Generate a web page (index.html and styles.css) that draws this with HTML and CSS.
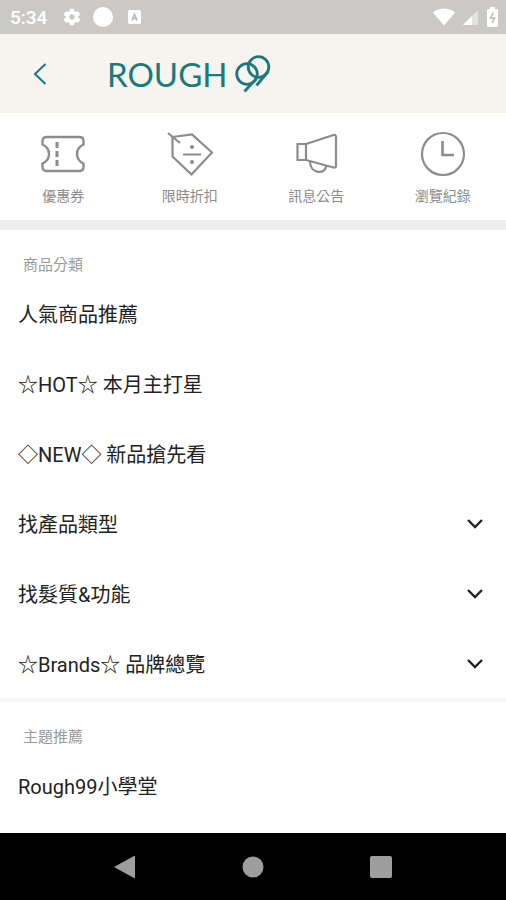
FILE: index.html
```html
<!DOCTYPE html>
<html lang="zh-Hant">
<head>
<meta charset="utf-8">
<meta name="viewport" content="width=device-width, initial-scale=1">
<title>ROUGH99</title>
<link rel="stylesheet" href="styles.css">
</head>
<body>
<div class="status">
  <span class="time">5:34</span>
  <svg class="gear" width="20" height="20" viewBox="0 0 24 24"><path fill="currentColor" fill-rule="evenodd" d="M19.4 13a7.500 7.500 0 0 0 0-2l2.100-1.600a.5.5 0 0 0 .1-.6l-2-3.500a.5.5 0 0 0-.6-.2l-2.500 1a7.300 7.300 0 0 0-1.700-1L14.400 2.400a.5.5 0 0 0-.5-.4h-4a.5.5 0 0 0-.5.4L9 5.100a7.700 7.700 0 0 0-1.700 1l-2.500-1a.5.5 0 0 0-.6.2l-2 3.500a.5.5 0 0 0 .1.600L4.500 11a8 8 0 0 0 0 2l-2.200 1.600a.5.5 0 0 0-.1.600l2 3.500c.1.200.4.300.6.200l2.500-1a7.300 7.300 0 0 0 1.700 1l.4 2.700c0 .2.200.4.500.4h4c.3 0 .5-.2.500-.4l.4-2.700a7.700 7.700 0 0 0 1.700-1l2.500 1c.2.100.5 0 .6-.2l2-3.500a.5.5 0 0 0-.1-.6zM12 15.200a3.200 3.200 0 1 1 0-6.400 3.200 3.200 0 0 1 0 6.400z"/></svg>
  <svg width="20" height="20" viewBox="0 0 20 20"><circle cx="10" cy="10" r="10" fill="currentColor"/></svg>
  <svg width="20" height="20" viewBox="0 0 20 20"><rect x="4" y="3" width="13" height="14" rx="1.500" fill="currentColor"/><path d="M8 13.500 10.500 7l2.500 6.500M9 11.500h3" fill="none" stroke="#b9b7b4" stroke-width="1.500"/></svg>
  <span class="system">
    <svg width="22" height="18" viewBox="0 0 22 18"><path fill="currentColor" d="M0 4.500C6-.8 16-.8 22 4.500L11 17.500z"/></svg>
    <svg width="16" height="18" viewBox="0 0 16 18"><path fill="currentColor" opacity=".45" d="M0 17 15 2v15z"/><path fill="currentColor" d="M0 17 9 8v9z"/></svg>
    <svg width="11" height="20" viewBox="0 0 11 20"><path fill="currentColor" d="M3 2V0h5v2h1.500Q11 2 11 3.500v15Q11 20 9.500 20h-8Q0 20 0 18.500v-15Q0 2 1.500 2z"/><path d="M6.500 5.500 3.500 11h4L5 16" fill="none" stroke="#b9b7b4" stroke-width="1.500"/></svg>
  </span>
</div>

<header class="header">
  <button class="back" aria-label="返回"><svg width="14" height="24" viewBox="0 0 14 24"><path d="M12.500 2 2 12l10.500 10" fill="none" stroke="currentColor" stroke-width="2"/></svg></button>
  <a class="logo" href="#">
    <span class="wordmark">ROUGH</span>
    <svg class="monogram" width="36" height="38" viewBox="0 0 36 38"><g fill="none" stroke="currentColor" stroke-width="2.800"><circle cx="12" cy="19" r="10.300"/><circle cx="23.500" cy="12" r="10.300"/><path d="M21.500 23.500 9.500 36.500M33 16.500 21.500 30.500"/></g></svg>
  </a>
</header>

<nav class="shortcuts">
  <a href="#"><svg width="46" height="46" viewBox="0 0 46 46"><g fill="none" stroke="currentColor" stroke-width="2.400"><path d="M6.500 6h33q4 0 4 4v3.500q-6.500 3-6.500 9.500t6.500 9.500V36q0 4-4 4h-33q-4 0-4-4v-3.500Q9 29.500 9 23t-6.500-9.500V10q0-4 4-4z"/><path d="M17 11v6M17 20v6M17 29v6" stroke-width="3"/></g></svg>優惠券</a>
  <a href="#"><svg width="46" height="46" viewBox="0 0 46 46"><g fill="none" stroke="currentColor" stroke-width="2.200"><path d="M5.500 6 25 3.500l20 18L24.500 43.500l-19-18z"/><path d="m1 2 12 10M16 23.500h18"/></g><g fill="currentColor"><circle cx="25" cy="16" r="2"/><circle cx="25" cy="31" r="2"/></g></svg>限時折扣</a>
  <a href="#"><svg width="46" height="46" viewBox="0 0 46 46"><g fill="none" stroke="currentColor" stroke-width="2.200"><path d="M4.500 13H13v16H4.500zM13 13l27.500-9q2.500-.5 2.500 2v29q0 2-2.500 1.500L13 29M17 30.500c0 13 16 13 16 4.500"/></g></svg>訊息公告</a>
  <a href="#"><svg width="46" height="46" viewBox="0 0 46 46"><g fill="none" stroke="currentColor" stroke-width="2.200"><circle cx="23" cy="23" r="21"/><path d="M22.500 10v14H34" stroke-width="2.600"/></g></svg>瀏覽紀錄</a>
</nav>

<main>
  <section>
    <h2>商品分類</h2>
    <a class="row" href="#">人氣商品推薦</a>
    <a class="row" href="#">☆HOT☆ 本月主打星</a>
    <a class="row" href="#">◇NEW◇ 新品搶先看</a>
    <button class="row" aria-expanded="false">找產品類型<svg width="18" height="12" viewBox="0 0 18 12"><path d="m2 3 7 7 7-7" fill="none" stroke="currentColor" stroke-width="2.400"/></svg></button>
    <button class="row" aria-expanded="false">找髮質&amp;功能<svg width="18" height="12" viewBox="0 0 18 12"><path d="m2 3 7 7 7-7" fill="none" stroke="currentColor" stroke-width="2.400"/></svg></button>
    <button class="row" aria-expanded="false">☆Brands☆ 品牌總覽<svg width="18" height="12" viewBox="0 0 18 12"><path d="m2 3 7 7 7-7" fill="none" stroke="currentColor" stroke-width="2.400"/></svg></button>
  </section>
  <section>
    <h2>主題推薦</h2>
    <a class="row" href="#">Rough99小學堂</a>
  </section>
</main>

<div class="navbar">
  <button aria-label="返回"><svg width="22" height="24" viewBox="0 0 22 24"><path d="M0 12 20 1q1-.5 1 .5v21q0 1-1 .5z" fill="currentColor"/></svg></button>
  <button aria-label="主畫面"><svg width="22" height="22" viewBox="0 0 22 22"><circle cx="11" cy="11" r="10.500" fill="currentColor"/></svg></button>
  <button aria-label="最近使用"><svg width="22" height="22" viewBox="0 0 22 22"><rect width="22" height="22" rx="2" fill="currentColor"/></svg></button>
</div>
</body>
</html>
```
FILE: styles.css
```css
* {
  box-sizing: border-box;
}

body {
  margin: 0;
  min-height: 100vh;
  display: flex;
  flex-direction: column;
  background: #fff;
  color: #222;
  font-family: Roboto, "Noto Sans CJK TC", sans-serif;
  font-size: 20px;
}

a {
  color: inherit;
  text-decoration: none;
}

button {
  border: 0;
  padding: 0;
  background: none;
  color: inherit;
  font: inherit;
}

svg {
  display: block;
  flex: none;
}

.status {
  display: flex;
  align-items: center;
  gap: 11px;
  height: 34px;
  padding: 0 8px 0 10px;
  background: #cbc9c6;
  color: #fff;
}

.time {
  font-size: 19px;
  font-weight: 500;
}

.gear {
  margin-left: 4px;
}

.system {
  display: flex;
  align-items: center;
  gap: 8px;
  margin-left: auto;
}

.header {
  display: flex;
  align-items: center;
  height: 79px;
  padding-left: 33px;
  background: #f7f4ef;
  color: #1a7a7e;
}

.logo {
  display: flex;
  align-items: center;
  gap: 8px;
  margin-left: 60px;
}

.wordmark {
  font-family: Lato, sans-serif;
  font-size: 33px;
  line-height: 40px;
}

.shortcuts {
  display: grid;
  grid-template-columns: repeat(4, 1fr);
  padding: 18px 0 14px;
  border-bottom: 10px solid #ededed;
  color: #8c8c8c;
  font-size: 14px;
  line-height: 20px;
}

.shortcuts a {
  display: flex;
  flex-direction: column;
  align-items: center;
  gap: 9px;
}

main {
  flex: 1;
}

section + section {
  border-top: 4px solid #f7f7f7;
}

h2 {
  margin: 0;
  padding: 24px 23px 2px;
  color: #999;
  font-size: 15px;
  font-weight: 400;
  line-height: 22px;
}

.row {
  display: flex;
  align-items: center;
  justify-content: space-between;
  width: 100%;
  height: 70px;
  padding: 0 22px 0 18px;
  text-align: left;
}

.navbar {
  display: grid;
  grid-template-columns: repeat(3, 1fr);
  height: 67px;
  padding: 0 12%;
  background: #000;
  color: #9e9e9e;
}

.navbar button {
  display: flex;
  align-items: center;
  justify-content: center;
}
```
